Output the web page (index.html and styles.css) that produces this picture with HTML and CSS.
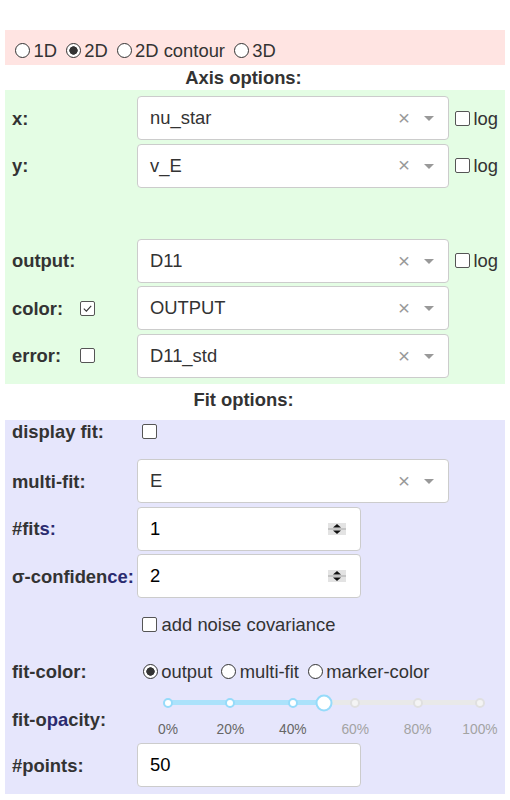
FILE: index.html
```html
<!DOCTYPE html>
<html>
<head>
<meta charset="utf-8">
<link rel="stylesheet" href="styles.css">
</head>
<body>
<div class="page">
  <div class="mode-bar">
    <label class="opt"><span class="radio"></span>1D</label>
    <label class="opt"><span class="radio on"></span>2D</label>
    <label class="opt"><span class="radio"></span>2D contour</label>
    <label class="opt"><span class="radio"></span>3D</label>
  </div>

  <div class="section-title axis-title">Axis options:</div>

  <div class="panel axis-panel">
    <div class="row">
      <div class="label">x:</div>
      <div class="select"><span class="value">nu_star</span><span class="clear">×</span><span class="arrow-zone"><span class="arrow"></span></span></div>
      <label class="log"><span class="cb"></span>log</label>
    </div>
    <div class="row">
      <div class="label">y:</div>
      <div class="select"><span class="value">v_E</span><span class="clear">×</span><span class="arrow-zone"><span class="arrow"></span></span></div>
      <label class="log"><span class="cb"></span>log</label>
    </div>
    <div class="row"></div>
    <div class="row">
      <div class="label">output:</div>
      <div class="select"><span class="value">D11</span><span class="clear">×</span><span class="arrow-zone"><span class="arrow"></span></span></div>
      <label class="log"><span class="cb"></span>log</label>
    </div>
    <div class="row">
      <div class="label"><span class="label-text">color:</span><span class="cb"><svg viewBox="0 0 13 13" width="13" height="13"><path d="M2.8 6.6 L5.4 9.1 L10.2 3.9" fill="none" stroke="#333" stroke-width="1.1"/></svg></span></div>
      <div class="select"><span class="value">OUTPUT</span><span class="clear">×</span><span class="arrow-zone"><span class="arrow"></span></span></div>
    </div>
    <div class="row">
      <div class="label"><span class="label-text">error:</span><span class="cb"></span></div>
      <div class="select"><span class="value">D11_std</span><span class="clear">×</span><span class="arrow-zone"><span class="arrow"></span></span></div>
    </div>
  </div>

  <div class="section-title fit-title">Fit options:</div>

  <div class="panel fit-panel">
    <div class="row row-display">
      <div class="label">display fit:</div>
      <div class="cell"><span class="cb"></span></div>
    </div>
    <div class="row">
      <div class="label">multi-fit:</div>
      <div class="select"><span class="value">E</span><span class="clear">×</span><span class="arrow-zone"><span class="arrow"></span></span></div>
    </div>
    <div class="row">
      <div class="label">#fit<span class="hl">s:</span></div>
      <div class="num"><span class="num-value">1</span><span class="spin"><svg viewBox="0 0 18 12" width="18" height="12"><rect x="0" y="0" width="18" height="12" fill="#e3e3e3"/><rect x="0" y="5.5" width="18" height="1" fill="#a8a8a8"/><path d="M5 4.6 L9 0.9 L13 4.6 Z" fill="#111"/><path d="M5 7.4 L13 7.4 L9 11.1 Z" fill="#111"/></svg></span></div>
    </div>
    <div class="row">
      <div class="label">σ-confiden<span class="hl">ce:</span></div>
      <div class="num"><span class="num-value">2</span><span class="spin"><svg viewBox="0 0 18 12" width="18" height="12"><rect x="0" y="0" width="18" height="12" fill="#e3e3e3"/><rect x="0" y="5.5" width="18" height="1" fill="#a8a8a8"/><path d="M5 4.6 L9 0.9 L13 4.6 Z" fill="#111"/><path d="M5 7.4 L13 7.4 L9 11.1 Z" fill="#111"/></svg></span></div>
    </div>
    <div class="row">
      <div class="label"></div>
      <label class="noise"><span class="cb"></span>add noise covariance</label>
    </div>
    <div class="row">
      <div class="label">fit-color:</div>
      <div class="radios">
        <label class="opt"><span class="radio on"></span>output</label>
        <label class="opt"><span class="radio"></span>multi-fit</label>
        <label class="opt"><span class="radio"></span>marker-color</label>
      </div>
    </div>
    <div class="row row-slider">
      <div class="label slider-label">fit-o<span class="hl">pa</span>city:</div>
      <div class="slider-cell">
        <div class="slider">
          <div class="rail"></div>
          <div class="fill" style="width:50%"></div>
          <span class="dot active" style="left:0%"></span>
          <span class="dot active" style="left:20%"></span>
          <span class="dot active" style="left:40%"></span>
          <span class="dot" style="left:60%"></span>
          <span class="dot" style="left:80%"></span>
          <span class="dot" style="left:100%"></span>
          <span class="handle" style="left:50%"></span>
          <span class="mark active" style="left:0%">0%</span>
          <span class="mark active" style="left:20%">20%</span>
          <span class="mark active" style="left:40%">40%</span>
          <span class="mark" style="left:60%">60%</span>
          <span class="mark" style="left:80%">80%</span>
          <span class="mark" style="left:100%">100%</span>
        </div>
      </div>
    </div>
    <div class="row">
      <div class="label">#points:</div>
      <div class="num"><span class="num-value">50</span></div>
    </div>
  </div>
</div>
</body>
</html>
```

FILE: styles.css
```css
* { box-sizing: border-box; }

body {
  margin: 0;
  background: #fff;
  color: #333;
  font-family: "Liberation Sans", Arial, sans-serif;
  font-size: 18.4px;
}

.page {
  width: 500px;
  margin: 30px 5px 0;
}

/* top mode selector */
.mode-bar {
  height: 35px;
  background: #ffe4e2;
  display: flex;
  align-items: center;
  padding: 5px 0 0 4.25px;
}

.opt {
  display: flex;
  align-items: center;
  line-height: 21px;
}
.opt + .opt { margin-left: 3px; }

.radio {
  flex: none;
  width: 15px;
  height: 15px;
  margin: 0 3.5px 0 5.75px;
  border: 1px solid #333;
  border-radius: 50%;
  background: #fff;
}
.radio.on {
  background: radial-gradient(circle, #333 0, #333 3.9px, #fff 4.5px);
}

/* section headings */
.section-title {
  font-weight: bold;
  text-align: center;
  padding-right: 23px;
}
.axis-title { height: 25px; line-height: 26px; }
.fit-title { height: 36px; line-height: 32px; }

/* panels */
.panel {
  display: flex;
  flex-direction: column;
  gap: 3.6px;
  padding: 6px 7px;
}
.axis-panel { background: #e4fde4; }
.fit-panel { background: #e6e6fc; padding: 0 7px 7px; }

.row {
  display: grid;
  grid-template-columns: 125px 312px auto;
  align-items: center;
  height: 44px;
}

.label {
  font-weight: bold;
  display: flex;
  align-items: center;
  line-height: 21px;
}
.label-text { width: 63.4px; }
.hl { color: #2b2b70; }

/* checkbox */
.cb {
  flex: none;
  display: inline-flex;
  align-items: center;
  justify-content: center;
  width: 15px;
  height: 15px;
  margin-left: 4.6px;
  border: 1px solid #555;
  border-radius: 2px;
  background: #fff;
}
.cb svg { display: block; }

.log {
  display: flex;
  align-items: center;
  line-height: 21px;
}
.log .cb { margin-left: 6px; margin-right: 3.5px; }

/* dropdown */
.select {
  height: 44px;
  display: flex;
  align-items: center;
  padding: 0 4px 0 12px;
  background: #fff;
  border: 1px solid #ccc;
  border-radius: 4px;
}
.select .value { flex: 1; }
.clear {
  width: 20px;
  text-align: center;
  color: #999;
  font-size: 20.5px;
  line-height: 1;
}
.arrow-zone {
  width: 30px;
  display: flex;
  justify-content: center;
  padding-top: 3px;
}
.arrow {
  width: 0;
  height: 0;
  border-style: solid;
  border-width: 5.75px 5.75px 2.9px;
  border-color: #999 transparent transparent;
}

/* numeric inputs */
.num {
  width: 224px;
  height: 44px;
  display: flex;
  align-items: center;
  padding: 0 14px 0 12px;
  background: #fff;
  border: 1px solid #ccc;
  border-radius: 4px;
  color: #000;
}
.num-value { flex: 1; }
.spin { display: block; line-height: 0; }

/* fit panel specifics */
.row-display {
  height: 35.7px;
  align-items: start;
}
.row-display .label { line-height: 24px; height: 24px; }
.row-display .cell { height: 24px; display: flex; align-items: center; }

.noise {
  grid-column: 2 / 4;
  display: flex;
  align-items: center;
  line-height: 21px;
}
.noise .cb { margin-right: 5px; }

.radios {
  grid-column: 2 / 4;
  display: flex;
  align-items: center;
}

.row-slider {
  height: 42.4px;
  align-items: start;
}
.slider-label { margin-top: 12px; }
.slider-cell { grid-column: 2 / 4; }

.slider {
  position: relative;
  width: 312px;
  height: 42px;
  margin-left: 31px;
}
.rail, .fill {
  position: absolute;
  top: 3px;
  left: 0;
  height: 5px;
  border-radius: 3px;
}
.rail { right: 0; background: #e9e9e9; }
.fill { background: #abe2fb; }

.dot {
  position: absolute;
  top: 5.5px;
  width: 10px;
  height: 10px;
  transform: translate(-50%, -50%);
  border: 2px solid #e0e0e0;
  border-radius: 50%;
  background: #f4f4f4;
}
.dot.active { border-color: #96dbfa; background: #fff; }

.handle {
  position: absolute;
  top: 5.5px;
  width: 17px;
  height: 17px;
  transform: translate(-50%, -50%);
  border: 2px solid #96dbfa;
  border-radius: 50%;
  background: #fff;
}

.mark {
  position: absolute;
  top: 24.5px;
  transform: translateX(-50%);
  font-size: 13.8px;
  line-height: 16px;
  color: #a3a3a3;
  white-space: nowrap;
}
.mark.active { color: #666; }
```
